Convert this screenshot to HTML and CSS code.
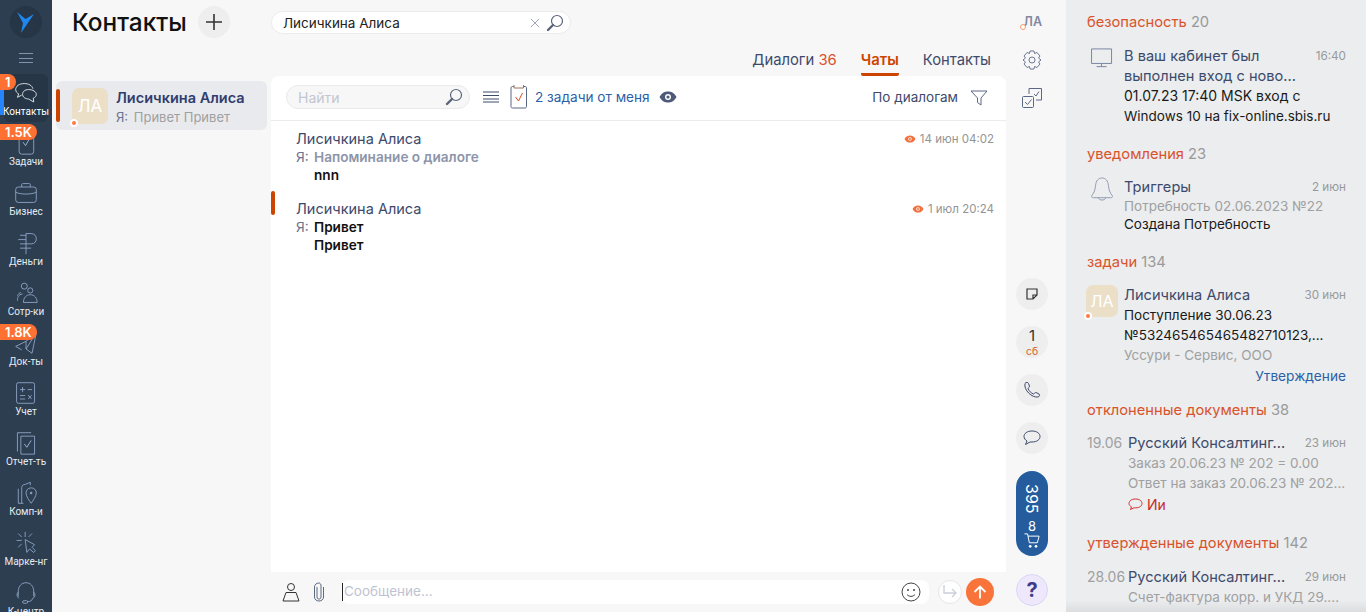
FILE: index.html
```html
<!DOCTYPE html>
<html lang="ru">
<head>
    <meta charset="UTF-8">
    <title>Контакты</title>
    <link rel="stylesheet" href="styles.css">
</head>
<body>
    <!-- левое меню -->
    <nav class="sidebar">
        <div class="logo">
            <svg width="32" height="32" viewBox="0 0 32 32"><path d="M7 6 L15.500 13 L24 8 L11 27 L13 17 Z" fill="#1e88f0"/></svg>
        </div>
        <div class="burger"><span></span><span></span><span></span></div>

        <a class="nav-item active">
            <span class="badge">1</span>
            <svg class="nav-icon" viewBox="0 0 30 28"><path d="M13 3 C7 3 3 6 3 10 C3 12.500 4.500 14 6.500 15 L5 19 L10 16.500" /><path d="M13 3 C18 3 22 5 23 9" /><path d="M18 10 C13.500 10 11 12.500 11 15.500 C11 18.500 14 21 18 21 L24 24.500 L23.500 20 C26 19 27 17.500 27 15.500 C27 12.500 23 10 18 10 Z" /></svg>
            <span class="nav-label">Контакты</span>
        </a>
        <a class="nav-item">
            <span class="badge">1.5K</span>
            <svg class="nav-icon" viewBox="0 0 30 28"><rect x="7" y="2" width="17" height="25" rx="3"/><path d="M11.500 13 L14.500 17 L19 9" stroke="#a9c4e6"/></svg>
            <span class="nav-label">Задачи</span>
        </a>
        <a class="nav-item">
            <svg class="nav-icon" viewBox="0 0 30 28"><rect x="3" y="7" width="24" height="18" rx="3"/><path d="M3 13 C8 16 22 16 27 13 M10 7 V4 C10 3 11 3 12 3 H18 C19 3 20 3 20 4 V7"/></svg>
            <span class="nav-label">Бизнес</span>
        </a>
        <a class="nav-item">
            <svg class="nav-icon" viewBox="0 0 30 28"><path d="M15 27 V3 H21 C25 3 27 6 27 9 C27 12.500 25 15 21 15 H8 M8 5 H15 M6 10 H15 M8 20 H21"/></svg>
            <span class="nav-label">Деньги</span>
        </a>
        <a class="nav-item">
            <svg class="nav-icon" viewBox="0 0 30 28"><circle cx="13" cy="6" r="3.500"/><circle cx="20" cy="11" r="3"/><path d="M5 23 C5 19 6 16 11 15 M5 17 C6 15 7 14 9 13.500 M12 25 C12 20 15 16 20 16 C25 16 28 20 28 25 Z"/></svg>
            <span class="nav-label">Сотр-ки</span>
        </a>
        <a class="nav-item">
            <span class="badge">1.8K</span>
            <svg class="nav-icon" viewBox="0 0 30 28"><path d="M27 2 L15 12 L3 18 L10 22 M27 2 L22 26 L15 21 L15 12 M27 2 L15 21"/></svg>
            <span class="nav-label">Док-ты</span>
        </a>
        <a class="nav-item">
            <svg class="nav-icon" viewBox="0 0 30 28"><rect x="4" y="2" width="21" height="24" rx="2"/><path d="M8 10 H14 M11 7 V13 M17 10 H22 M8 17 H14 M8 21 H14 M17.500 16.500 L21.500 21 M21.500 16.500 L17.500 21"/></svg>
            <span class="nav-label">Учет</span>
        </a>
        <a class="nav-item">
            <svg class="nav-icon" viewBox="0 0 30 28"><path d="M21 2 H5 V24 M9 6 H25 V27 H9 Z"/><path d="M13 15 L16 19 L21 11" stroke="#a9c4e6"/></svg>
            <span class="nav-label">Отчет-ть</span>
        </a>
        <a class="nav-item">
            <svg class="nav-icon" viewBox="0 0 30 28"><path d="M6 9 V26 H12 M10 26 V8 C10 5 12 4 14 4 L20 1.500 V5"/><path d="M21 8 C25 8 27 11 27 14 C27 18 23 23 21 26 C19 23 15 18 15 14 C15 11 17 8 21 8 Z"/><circle cx="21" cy="14" r="1" fill="#9fb6d8"/></svg>
            <span class="nav-label">Комп-и</span>
        </a>
        <a class="nav-item">
            <svg class="nav-icon" viewBox="0 0 30 28"><path d="M14 1 V7 M4 11 H10 M6 3 L10 7 M22 3 L18 7 M6 19 L10 15 M14 10 L16 25 L19 21 L24 25 L26 23 L22 19 L25 16 Z"/></svg>
            <span class="nav-label">Марке-нг</span>
        </a>
        <a class="nav-item">
            <svg class="nav-icon" viewBox="0 0 30 28"><path d="M6 18 V12 C6 6 10 2 15 2 C20 2 24 6 24 12 V18 M6 13 C4 14 4 19 7 20 M24 13 C26 14 26 19 23 20 M23 20 C22 23 20 24 17 24"/><rect x="11" y="23" width="6" height="3" rx="1.500"/></svg>
            <span class="nav-label">К-центр</span>
        </a>
    </nav>

    <main class="center">
        <!-- колонка со списком -->
        <section class="list-col">
            <header class="title-row">
                <h1>Контакты</h1>
                <button class="add-btn">
                    <svg width="18" height="18" viewBox="0 0 18 18"><path d="M9 1 V17 M1 9 H17" stroke="#333" stroke-width="1.600"/></svg>
                </button>
            </header>
            <div class="contact">
                <span class="contact-mark"></span>
                <div class="avatar">ЛА<i class="status"></i></div>
                <div class="contact-text">
                    <div class="contact-name">Лисичкина Алиса</div>
                    <div class="contact-msg"><span class="me">Я:</span> Привет Привет</div>
                </div>
            </div>
        </section>

        <section class="chat-col">
            <div class="search">
                <span class="search-text">Лисичкина Алиса</span>
                <svg width="10" height="10" viewBox="0 0 12 12"><path d="M1 1 L11 11 M11 1 L1 11" stroke="#a3a9b8" stroke-width="1.200"/></svg>
                <svg class="loupe" width="18" height="18" viewBox="0 0 18 18"><circle cx="11" cy="7" r="5.500" fill="none" stroke="#59647c" stroke-width="1.200"/><path d="M7 11 L2 16" stroke="#59647c" stroke-width="2.400" stroke-linecap="round"/></svg>
            </div>

            <div class="tabs">
                <a class="tab">Диалоги <b>36</b></a>
                <a class="tab selected">Чаты</a>
                <a class="tab">Контакты</a>
            </div>

            <div class="panel">
                <div class="toolbar">
                    <div class="find">
                        <span>Найти</span>
                        <svg class="loupe" width="18" height="18" viewBox="0 0 18 18"><circle cx="11" cy="7" r="5.500" fill="none" stroke="#59647c" stroke-width="1.200"/><path d="M7 11 L2 16" stroke="#59647c" stroke-width="2.400" stroke-linecap="round"/></svg>
                    </div>
                    <svg class="lines" width="16" height="12" viewBox="0 0 16 12"><path d="M0 1 H16 M0 4.500 H16 M0 8 H16 M0 11 H16" stroke="#3d4a6b" stroke-width="1"/></svg>
                    <svg class="clip-task" width="18" height="24" viewBox="0 0 18 24"><path d="M4 1.500 H2.500 C1.500 1.500 1 2 1 3 V21.500 C1 22.500 1.500 23 2.500 23 H15 C16 23 16.500 22.500 16.500 21.500 V3 C16.500 2 16 1.500 15 1.500 H13.500" fill="none" stroke="#5b6784"/><path d="M4 0 V3 H13.500 V0" fill="none" stroke="#a0705a"/><path d="M5.500 12 L8.500 16 L12.500 8" fill="none" stroke="#d9481c"/></svg>
                    <a class="my-tasks">2 задачи от меня</a>
                    <svg class="eye" width="18" height="12" viewBox="0 0 18 12"><path d="M0.500 6 C3 1.500 6 0.500 9 0.500 C12 0.500 15 1.500 17.500 6 C15 10.500 12 11.500 9 11.500 C6 11.500 3 10.500 0.500 6 Z" fill="#4d5a78"/><circle cx="9" cy="6" r="3" fill="#fff"/><circle cx="9" cy="6" r="1.600" fill="#4d5a78"/></svg>
                    <span class="by-dialogs">По диалогам</span>
                    <svg class="funnel" width="18" height="16" viewBox="0 0 18 16"><path d="M1 1 H17 L11 8 V15 L7.500 12.500 V8 Z" fill="none" stroke="#5b6784"/></svg>
                </div>

                <div class="messages">
                    <article class="message">
                        <div class="msg-head">
                            <span class="msg-name">Лисичкина Алиса</span>
                            <span class="msg-date"><svg width="12" height="8" viewBox="0 0 12 8"><path d="M0.500 4 C2 1 4 0.500 6 0.500 C8 0.500 10 1 11.500 4 C10 7 8 7.500 6 7.500 C4 7.500 2 7 0.500 4 Z" fill="#f2703d"/><circle cx="6" cy="4" r="1.800" fill="#fff"/><circle cx="6" cy="4" r="1" fill="#f2703d"/></svg> 14 июн 04:02</span>
                        </div>
                        <div class="msg-line"><span class="me">Я:</span><span class="msg-body muted">Напоминание о диалоге</span></div>
                        <div class="msg-line"><span class="me"></span><span class="msg-body">nnn</span></div>
                    </article>
                    <article class="message">
                        <span class="msg-mark"></span>
                        <div class="msg-head">
                            <span class="msg-name">Лисичкина Алиса</span>
                            <span class="msg-date"><svg width="12" height="8" viewBox="0 0 12 8"><path d="M0.500 4 C2 1 4 0.500 6 0.500 C8 0.500 10 1 11.500 4 C10 7 8 7.500 6 7.500 C4 7.500 2 7 0.500 4 Z" fill="#f2703d"/><circle cx="6" cy="4" r="1.800" fill="#fff"/><circle cx="6" cy="4" r="1" fill="#f2703d"/></svg> 1 июл 20:24</span>
                        </div>
                        <div class="msg-line"><span class="me">Я:</span><span class="msg-body">Привет</span></div>
                        <div class="msg-line"><span class="me"></span><span class="msg-body">Привет</span></div>
                    </article>
                </div>

                <div class="composer">
                    <svg width="18" height="20" viewBox="0 0 18 20"><circle cx="9" cy="5" r="3.500" fill="none" stroke="#333"/><path d="M4 10.500 H14 L17 19 H1 Z" fill="none" stroke="#333"/></svg>
                    <svg class="paperclip" width="12" height="20" viewBox="0 0 12 20"><path d="M4 5 V15 C4 16.500 4.800 17 6 17 C7.200 17 8 16.500 8 15 V4 C8 2 7 1 6 1 C3.500 1 1.500 2.500 1.500 5 V15 C1.500 17.500 3.500 19 6 19 C8.500 19 10.500 17.500 10.500 15 V5" fill="none" stroke="#5a6a80"/></svg>
                    <div class="msg-input">
                        <span class="caret"></span>
                        <span class="placeholder">Сообщение...</span>
                        <svg class="smile" width="20" height="20" viewBox="0 0 20 20"><circle cx="10" cy="10" r="9" fill="none" stroke="#444"/><circle cx="7" cy="8" r="1" fill="#444"/><circle cx="13" cy="8" r="1" fill="#444"/><path d="M6 12.500 C8 15 12 15 14 12.500" fill="none" stroke="#444"/></svg>
                    </div>
                    <button class="forward-btn"><svg width="16" height="14" viewBox="0 0 16 14"><path d="M2 0 V8 H14 M10 4 L14 8 L10 12" fill="none" stroke="#ccd0d8" stroke-width="1.400"/></svg></button>
                    <button class="send-btn"><svg width="14" height="14" viewBox="0 0 14 14"><path d="M7 13.500 V1.500 M1.500 7 L7 1.500 L12.500 7" fill="none" stroke="#fff" stroke-width="1.800"/></svg></button>
                </div>
            </div>
        </section>

        <!-- узкая колонка с кнопками -->
        <aside class="rail">
            <span class="rail-user"><i class="status small"></i>ЛА</span>
            <svg class="rail-icon" width="20" height="20" viewBox="0 0 20 20"><path d="M8 1 H12 L12.500 3.500 L15 2.500 L18 6 L16.500 8 L19 10 L16.500 12 L18 14 L15 17.500 L12.500 16.500 L12 19 H8 L7.500 16.500 L5 17.500 L2 14 L3.500 12 L1 10 L3.500 8 L2 6 L5 2.500 L7.500 3.500 Z" fill="none" stroke="#6d7994" stroke-linejoin="round"/><circle cx="10" cy="10" r="3" fill="none" stroke="#6d7994"/></svg>
            <svg class="rail-icon" width="20" height="20" viewBox="0 0 20 20"><rect x="0.500" y="8.500" width="11" height="11" rx="1" fill="none" stroke="#5b6784"/><path d="M3 14 L5.500 16.500 L9.500 11.500" fill="none" stroke="#5b6784"/><path d="M7 6 V0.500 H19.500 V12 H14" fill="none" stroke="#5b6784"/><path d="M12 6 L14 8 L17 3.500" fill="none" stroke="#5b6784"/></svg>

            <div class="rail-bottom">
                <button class="round"><svg width="12" height="12" viewBox="0 0 12 12"><path d="M11 7 V1 H1 V11 H7 Z M7 11 V7 H11" fill="none" stroke="#333" stroke-width="1.200"/></svg></button>
                <button class="round date-btn"><span class="day">1</span><span class="weekday">сб</span></button>
                <button class="round"><svg width="18" height="18" viewBox="0 0 18 18"><path d="M2 2.500 C3 1 5 1 5.500 2.500 L6.500 5 C6.500 6.500 5.500 6.500 5 7.500 C6 10 8 12 10.500 13 C11.500 12.500 12 11.500 13 11.500 L16 13 C17 14 16.500 15.500 15 16 C9 17 0.500 9 2 2.500 Z" fill="none" stroke="#3d4a6b"/></svg></button>
                <button class="round"><svg width="18" height="16" viewBox="0 0 18 16"><path d="M9 1 C4 1 1 3.500 1 6.500 C1 8.500 2.500 10 4 11 L2.500 14.500 L7 12 C7.500 12 8.500 12 9 12 C14 12 17 9.500 17 6.500 C17 3.500 14 1 9 1 Z" fill="none" stroke="#3d4a6b"/></svg></button>
                <div class="cart-pill">
                    <span class="cart-sum">395</span>
                    <span class="cart-num">8</span>
                    <svg width="18" height="16" viewBox="0 0 18 18"><path d="M0.500 1 H4 L6 11 H15 L17 3.500 H4.500" fill="none" stroke="#fff" stroke-width="1.100"/><circle cx="7" cy="15" r="1.500" fill="#fff"/><circle cx="13.500" cy="15" r="1.500" fill="#fff"/></svg>
                </div>
                <button class="round help">?</button>
            </div>
        </aside>
    </main>

    <!-- лента справа -->
    <aside class="feed">
        <h2 class="feed-title sec-security">безопасность <span>20</span></h2>
        <div class="feed-item">
            <svg class="feed-icon monitor" viewBox="0 0 24 22"><path d="M0.500 1 H22.500 V17 H0.500 Z M11.500 17 V20 M6 20.500 H17" fill="none" stroke="#717d9c"/></svg>
            <div class="feed-body lh20">
                <div class="feed-top"><span class="feed-name">В ваш кабинет был</span><time>16:40</time></div>
                <div class="feed-name">выполнен вход с ново...</div>
                <div class="dark wide">01.07.23 17:40 MSK вход с</div>
                <div class="dark">Windows 10 на fix-online.sbis.ru</div>
            </div>
        </div>

        <h2 class="feed-title sec-notify">уведомления <span>23</span></h2>
        <div class="feed-item">
            <svg class="feed-icon bell" viewBox="0 0 24 26"><path d="M12 1 C8 1 5.500 4 5 9 C4.500 14 3.500 17 1 20 C0 21.500 1 22.500 2.500 22.500 H21.500 C23 22.500 24 21.500 23 20 C20.500 17 19.500 14 19 9 C18.500 4 16 1 12 1 Z M8 22.500 C8.500 24.500 10 25 12 25 C14 25 15.500 24.500 16 22.500" fill="none" stroke="#8b95ad"/></svg>
            <div class="feed-body lh18">
                <div class="feed-top"><span class="feed-name">Триггеры</span><time>2 июн</time></div>
                <div class="gray">Потребность 02.06.2023 №22</div>
                <div class="dark">Создана Потребность</div>
            </div>
        </div>

        <h2 class="feed-title sec-tasks">задачи <span>134</span></h2>
        <div class="feed-item tight">
            <div class="avatar feed-avatar">ЛА<i class="status"></i></div>
            <div class="feed-body lh20">
                <div class="feed-top"><span class="feed-name">Лисичкина Алиса</span><time>30 июн</time></div>
                <div class="dark">Поступление 30.06.23</div>
                <div class="dark">№532465465465482710123,...</div>
                <div class="gray">Уссури - Сервис, ООО</div>
                <div class="feed-link">Утверждение</div>
            </div>
        </div>

        <h2 class="feed-title sec-rejected">отклоненные документы <span>38</span></h2>
        <div class="feed-item tight">
            <span class="doc-date">19.06</span>
            <div class="feed-body lh20">
                <div class="feed-top"><span class="feed-name">Русский Консалтинг...</span><time>23 июн</time></div>
                <div class="gray">Заказ 20.06.23 № 202 = 0.00</div>
                <div class="gray">Ответ на заказ 20.06.23 № 202...</div>
                <div class="comment"><svg width="15" height="13" viewBox="0 0 15 13"><path d="M7.500 1 C3.500 1 1 3 1 5.500 C1 7 2 8 3.500 8.800 L2.500 11.500 L6 9.800 C10.500 10.200 14 8.500 14 5.500 C14 3 11.500 1 7.500 1 Z" fill="none" stroke="#d32f2f"/></svg> Ии</div>
            </div>
        </div>

        <h2 class="feed-title sec-approved">утвержденные документы <span>142</span></h2>
        <div class="feed-item">
            <span class="doc-date">28.06</span>
            <div class="feed-body lh20">
                <div class="feed-top"><span class="feed-name">Русский Консалтинг...</span><time>29 июн</time></div>
                <div class="gray">Счет-фактура корр. и УКД 29....</div>
            </div>
        </div>
        <div class="feed-fade"></div>
    </aside>
</body>
</html>
```
FILE: styles.css
```css
* {
    box-sizing: border-box;
}

html,
body {
    margin: 0;
    height: 612px;
    overflow: hidden;
}

body {
    display: flex;
    width: 1366px;
    font-family: Inter, "Noto Sans", sans-serif;
    font-size: 14px;
    color: #313d5e;
    background-color: #f7f7f7;
}

button {
    padding: 0;
    border: 0;
    font-family: inherit;
}

/* sidebar */
.sidebar {
    flex: none;
    width: 52px;
    height: 612px;
    overflow: hidden;
    background-color: #2c3e50;
    display: flex;
    flex-direction: column;
    align-items: center;
    padding-top: 6px;
}

.logo {
    width: 32px;
    height: 32px;
    border-radius: 50%;
    background-color: #263646;
    flex: none;
}

.burger {
    flex: none;
    width: 14px;
    height: 10px;
    margin: 15px 0 11px;
    display: flex;
    flex-direction: column;
    justify-content: space-between;
}

.burger span {
    height: 1px;
    background-color: #8493a8;
}

.nav-item {
    flex: none;
    position: relative;
    width: 44px;
    height: 50px;
    display: flex;
    flex-direction: column;
    align-items: center;
    padding-top: 7px;
}

.nav-item.active {
    height: 48px;
    margin-bottom: 2px;
    background-color: #263646;
    border-radius: 6px;
}

.nav-item.active::before {
    content: "";
    position: absolute;
    left: -4px;
    top: 16px;
    width: 4px;
    height: 25px;
    background-color: #2684ff;
}

.nav-icon {
    flex: none;
    width: 26px;
    height: 24px;
    fill: none;
    stroke: #93a9cc;
    stroke-width: 1;
}

.nav-item.active .nav-icon {
    stroke: #f2f4f7;
}

.nav-label {
    margin-top: 1px;
    font-family: Roboto, sans-serif;
    font-size: 10px;
    line-height: 12px;
    white-space: nowrap;
    color: #e6ebf1;
}

.nav-item.active .nav-label {
    color: #fff;
}

.badge {
    position: absolute;
    left: -4px;
    top: 0;
    z-index: 2;
    height: 16px;
    padding: 0 5px;
    border-radius: 0 8px 8px 0;
    background-color: #ff7033;
    color: #fff;
    font-size: 13px;
    font-weight: 600;
    line-height: 16px;
}

/* center */
.center {
    flex: 1;
    min-width: 0;
    display: flex;
    height: 612px;
}

.list-col {
    flex: none;
    width: 219px;
    padding-left: 4px;
}

.title-row {
    height: 81px;
    padding: 6px 0 0 16px;
    display: flex;
    align-items: flex-start;
    gap: 11px;
}

.title-row h1 {
    margin: 0;
    font-size: 24.400px;
    font-weight: 500;
    line-height: 32px;
    color: #111;
}

.add-btn {
    width: 32px;
    height: 32px;
    border-radius: 50%;
    background-color: #eeeeee;
    display: flex;
    align-items: center;
    justify-content: center;
}

.contact {
    position: relative;
    width: 211px;
    height: 49px;
    background-color: #e8eaee;
    border-radius: 6px;
    display: flex;
    padding: 7px 0 0 16px;
    gap: 8px;
}

.contact-mark {
    position: absolute;
    left: 0;
    top: 8px;
    width: 4px;
    height: 33px;
    border-radius: 2px;
    background-color: #cc4400;
}

.avatar {
    position: relative;
    flex: none;
    width: 36px;
    height: 36px;
    border-radius: 7px;
    background-color: #ecdfc8;
    color: #fff;
    font-size: 17px;
    line-height: 36px;
    text-align: center;
}

.status {
    position: absolute;
    left: -2px;
    bottom: -3px;
    width: 8px;
    height: 8px;
    border-radius: 50%;
    background-color: #ff7a45;
    border: 2px solid #fff;
}

.status.small {
    left: -2px;
    bottom: 0;
    width: 6px;
    height: 6px;
    border-width: 1px;
    background-color: #fff;
    border-color: #ff9a70;
}

.contact-text {
    padding-top: 1px;
}

.contact-name {
    font-size: 14.500px;
    font-weight: 600;
    line-height: 18px;
    color: #313d6e;
}

.contact-msg {
    font-size: 13px;
    line-height: 21px;
    color: #a0a0a0;
}

.me {
    color: #6b7590;
    margin-right: 2px;
}

/* chat */
.chat-col {
    flex: 1;
    min-width: 0;
    display: flex;
    flex-direction: column;
}

.search {
    flex: none;
    width: 300px;
    height: 23px;
    margin-top: 11px;
    padding: 0 6px 0 11px;
    border: 1px solid #ebebeb;
    border-radius: 12px;
    background-color: #fff;
    display: flex;
    align-items: center;
    gap: 6px;
}

.search-text {
    flex: 1;
    font-size: 13.500px;
    color: #222;
}

.tabs {
    flex: none;
    height: 42px;
    padding: 7px 15px 0 0;
    display: flex;
    justify-content: flex-end;
    gap: 24px;
}

.tab {
    height: 35px;
    font-size: 14.800px;
    line-height: 39px;
    color: #3d4a6b;
}

.tab b {
    font-weight: 400;
    color: #d9532c;
}

.tab.selected {
    color: #cc4400;
    font-weight: 600;
    border-bottom: 3px solid #cc4400;
    border-radius: 0 0 2px 2px;
}

.panel {
    flex: 1;
    min-height: 0;
    display: flex;
    flex-direction: column;
    background-color: #fff;
    border-radius: 8px 8px 0 0;
}

.toolbar {
    flex: none;
    height: 45px;
    padding: 9px 12px 0 15px;
    border-bottom: 1px solid #ececec;
    display: flex;
    align-items: flex-start;
}

.find {
    width: 184px;
    height: 24px;
    padding: 0 6px 0 11px;
    border: 1px solid #eaeaea;
    border-radius: 12px;
    background-color: #f7f7f7;
    color: #c3c6d0;
    display: flex;
    align-items: center;
    justify-content: space-between;
}

.lines {
    margin: 6px 0 0 13px;
}

.clip-task {
    margin: 0 0 0 11px;
}

.my-tasks {
    margin-left: 7px;
    font-size: 13.600px;
    line-height: 25px;
    color: #2b5fa8;
}

.eye {
    margin: 6px 0 0 9px;
}

.by-dialogs {
    margin-left: auto;
    line-height: 25px;
    color: #3d4a6b;
    font-size: 13.500px;
}

.funnel {
    margin: 5px 6px 0 12px;
}

.messages {
    flex: 1;
    min-height: 0;
    padding-top: 7px;
}

.message {
    position: relative;
    height: 70px;
    padding: 0 12px 0 25px;
}

.msg-mark {
    position: absolute;
    left: 0;
    top: -7px;
    width: 4px;
    height: 24px;
    border-radius: 2px;
    background-color: #cc4400;
}

.msg-head {
    display: flex;
    justify-content: space-between;
    align-items: center;
    height: 20px;
}

.msg-name {
    font-size: 14.500px;
    color: #3d4a6b;
}

.msg-date {
    padding-top: 2px;
    font-size: 11.500px;
    color: #949494;
    display: flex;
    align-items: center;
    gap: 4px;
}

.msg-line {
    display: flex;
    font-size: 13.600px;
    line-height: 18px;
}

.msg-line .me {
    width: 18px;
    margin-right: 0;
}

.msg-body {
    font-weight: 600;
    color: #111;
}

.msg-body.muted {
    color: #8d95aa;
}

.composer {
    flex: none;
    height: 40px;
    padding: 0 12px 0 11px;
    background-color: #f7f7f7;
    display: flex;
    align-items: center;
}

.paperclip {
    margin-left: 13px;
}

.msg-input {
    flex: 1;
    height: 24px;
    margin: 0 9px 0 16px;
    padding-right: 8px;
    border-radius: 8px;
    background-color: #fff;
    display: flex;
    align-items: center;
}

.caret {
    width: 1px;
    height: 18px;
    margin-left: 1px;
    background-color: #222;
}

.placeholder {
    flex: 1;
    margin-left: 1px;
    font-size: 13.500px;
    line-height: 22px;
    padding-bottom: 2px;
    color: #bfc3d1;
}

.forward-btn {
    width: 24px;
    height: 24px;
    border-radius: 50%;
    border: 1px solid #e6e6e6;
    background-color: #fff;
    display: flex;
    align-items: center;
    justify-content: center;
}

.send-btn {
    width: 28px;
    height: 28px;
    margin-left: 4px;
    border-radius: 50%;
    background-color: #f9743a;
    display: flex;
    align-items: center;
    justify-content: center;
}

/* rail */
.rail {
    flex: none;
    width: 60px;
    height: 612px;
    display: flex;
    flex-direction: column;
    align-items: center;
    padding: 14px 8px 0 0;
}

.rail-user {
    position: relative;
    width: 20px;
    height: 16px;
    text-align: right;
    line-height: 16px;
    font-size: 12.500px;
    font-weight: 600;
    color: #8089a3;
}

.rail-icon {
    flex: none;
    margin-top: 20px;
}

.rail-icon + .rail-icon {
    margin-top: 18px;
}

.rail-bottom {
    margin-top: auto;
    padding-bottom: 6px;
    display: flex;
    flex-direction: column;
    align-items: center;
    gap: 16px;
}

.round {
    flex: none;
    width: 32px;
    height: 32px;
    border-radius: 50%;
    background-color: #eeeeee;
    display: flex;
    align-items: center;
    justify-content: center;
}

.date-btn {
    flex-direction: column;
}

.day {
    font-size: 15px;
    line-height: 18px;
    color: #333;
}

.weekday {
    font-size: 10.500px;
    line-height: 13px;
    color: #d9642c;
}

.cart-pill {
    flex: none;
    width: 32px;
    height: 85px;
    margin-top: 1px;
    border-radius: 16px;
    background-color: #245c9e;
    color: #fff;
    display: flex;
    flex-direction: column;
    align-items: center;
    padding-top: 13px;
}

.cart-sum {
    writing-mode: vertical-rl;
    font-size: 16px;
    line-height: 16px;
}

.cart-num {
    margin-top: 5px;
    font-size: 13px;
    line-height: 14px;
}

.round.help {
    margin-top: 2px;
    background-color: #ede8fb;
    border: 1px solid #ddd5f5;
    color: #3f3a8c;
    font-size: 20px;
    font-weight: 700;
}

/* feed */
.feed {
    position: relative;
    flex: none;
    width: 300px;
    height: 612px;
    overflow: hidden;
    padding: 0 20px 0 21px;
    background-color: #ebedef;
}

.feed-title {
    margin: 0;
    font-size: 14.700px;
    font-weight: 400;
    line-height: 20px;
    color: #d9532c;
}

.feed-title span {
    color: #999;
}

.sec-security {
    margin-top: 12px;
}

.sec-notify {
    margin-top: 18px;
}

.sec-tasks {
    margin-top: 18px;
}

.sec-rejected {
    margin-top: 14px;
}

.sec-approved {
    margin-top: 17px;
}

.feed-item {
    display: flex;
    margin-top: 14px;
}

.feed-item.tight {
    margin-top: 13px;
}

.feed-icon {
    flex: none;
    width: 22px;
    margin: 2px 11px 0 4px;
}

.feed-icon.monitor {
    height: 20px;
}

.feed-icon.bell {
    height: 24px;
    margin-top: -1px;
}

.feed-avatar {
    width: 32px;
    height: 32px;
    margin: 0 6px 0 -1px;
    line-height: 32px;
    font-size: 16px;
}

.feed-body {
    flex: 1;
    min-width: 0;
    white-space: nowrap;
    font-size: 13.500px;
}

.lh20 {
    line-height: 20px;
}

.lh18 {
    line-height: 18.500px;
}

.feed-top {
    display: flex;
    justify-content: space-between;
}

.feed-top time {
    font-size: 11.700px;
    color: #999;
}

.feed-name {
    font-size: 14.600px;
    color: #3d4a6b;
}

.dark {
    color: #1a1a1a;
}

.dark.wide {
    font-size: 14px;
}

.gray {
    color: #a0a0a0;
}

.feed-link {
    margin-top: 1px;
    text-align: right;
    font-size: 13.700px;
    color: #2b5fa8;
}

.doc-date {
    flex: none;
    width: 41px;
    color: #a0a0a0;
    line-height: 20px;
}

.comment {
    display: flex;
    align-items: center;
    gap: 4px;
    margin-top: 1px;
    font-size: 14px;
    color: #c62828;
    line-height: 22px;
}

.feed-fade {
    position: absolute;
    left: 0;
    right: 0;
    bottom: 0;
    height: 12px;
    background: linear-gradient(to bottom, rgba(235, 237, 239, 0), rgba(215, 217, 219, 0.8));
}
```
